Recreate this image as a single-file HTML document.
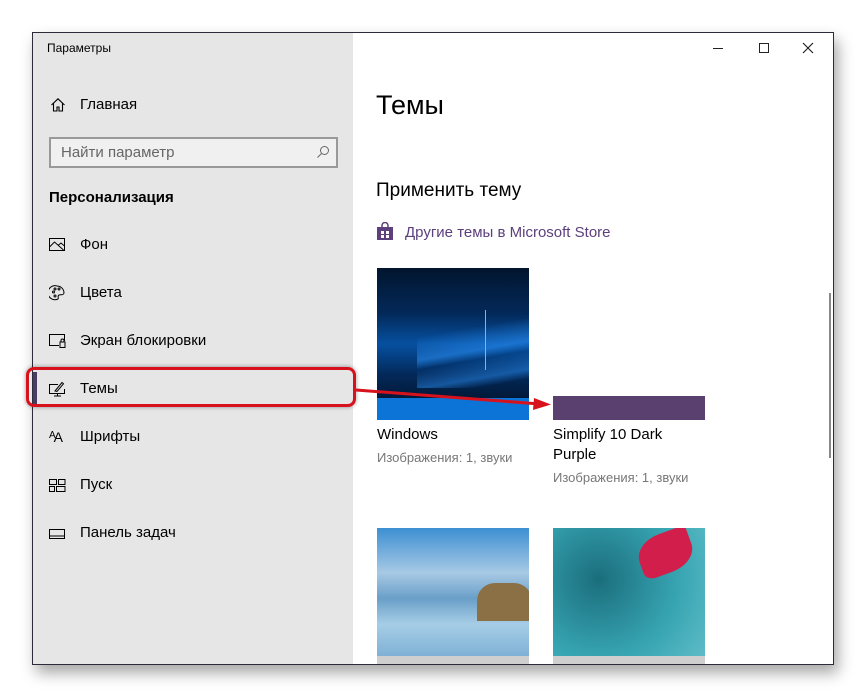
<!DOCTYPE html>
<html><head><meta charset="utf-8"><style>
*{margin:0;padding:0;box-sizing:border-box}
body{width:866px;height:697px;background:#fff;position:relative;overflow:hidden;font-family:"Segoe UI","Liberation Sans","DejaVu Sans",sans-serif;color:#000}
.win{position:absolute;left:32px;top:32px;width:802px;height:633px;border:1px solid #2b2b3a;background:#fff;box-shadow:4px 8px 14px rgba(0,0,0,.35);overflow:hidden}
.side{position:absolute;left:0;top:0;width:320px;height:100%;background:#e6e6e6}
.t{position:absolute;white-space:nowrap}
.nav{position:absolute;left:47px;font-size:15px;color:#000}
.ic{position:absolute;left:16px}
.thumb{position:absolute;width:152px}
</style></head><body>
<div class="win">
 <div class="side">
  <div class="t" style="left:14px;top:8px;font-size:12px">Параметры</div>
  <svg class="ic" style="left:17px;top:64px" width="16" height="16" viewBox="0 0 16 16" fill="none" stroke="#000" stroke-width="1.1"><path d="M1.5 8L8 1.8 14.5 8M3.5 6.3V14h3.5v-4h2v4h3.5V6.3"/></svg>
  <div class="nav t" style="top:63px">Главная</div>
  <div style="position:absolute;left:16px;top:104px;width:289px;height:31px;border:2px solid #999;background:#f0f0f0"></div>
  <div class="t" style="left:28px;top:111px;font-size:15px;color:#666">Найти параметр</div>
  <svg style="position:absolute;left:283px;top:112px" width="14" height="14" viewBox="0 0 14 14" fill="none" stroke="#666" stroke-width="1"><circle cx="8.5" cy="5.5" r="4"/><path d="M5.5 8.5L1.5 12.5"/></svg>
  <div class="t" style="left:16px;top:156px;font-size:15px;font-weight:bold">Персонализация</div>
  <svg class="ic" style="top:205px" width="17" height="14" viewBox="0 0 17 14" fill="none" stroke="#000" stroke-width="1"><rect x=".5" y=".5" width="15" height="12"/><path d="M.5 9l5-5 9 8M9 7.5l3-2.5 3.5 3"/></svg>
  <div class="nav t" style="top:203px">Фон</div>
  <svg class="ic" style="top:252px" width="16" height="16" viewBox="0 0 16 16" fill="none" stroke="#000" stroke-width="1"><path d="M8 1a7 7 0 1 0 1 13c1-1-1-3 1-4s4 1 5-2A7 7 0 0 0 8 1z"/><circle cx="4.5" cy="7" r="1"/><circle cx="6" cy="4" r="1"/><circle cx="10" cy="4" r="1"/><circle cx="6" cy="11" r="1"/></svg>
  <div class="nav t" style="top:251px">Цвета</div>
  <svg class="ic" style="top:301px" width="17" height="14" viewBox="0 0 17 14" fill="none" stroke="#000" stroke-width="1"><path d="M10 11.5H.5V.5h15V7"/><rect x="11" y="8" width="5" height="5.5"/><path d="M12 8V6.5a1.5 1.5 0 0 1 3 0V8"/></svg>
  <div class="nav t" style="top:299px">Экран блокировки</div>
  <div style="position:absolute;left:0;top:339px;width:4px;height:32px;background:#4b3a63"></div>
  <svg class="ic" style="top:348px" width="17" height="16" viewBox="0 0 17 16" fill="none" stroke="#000" stroke-width="1"><path d="M9 3.5H.5v9h15V8"/><path d="M5 15h7M8.5 12.5V15M6 10l7-8.5 1.5 1.3L8 10.5z"/></svg>
  <div class="nav t" style="top:347px">Темы</div>
  <div class="ic t" style="top:396px;font-size:14px;letter-spacing:-2px"><span style="font-size:10px;vertical-align:4px">A</span>A</div>
  <div class="nav t" style="top:395px">Шрифты</div>
  <svg class="ic" style="top:446px" width="17" height="13" viewBox="0 0 17 13" fill="none" stroke="#000" stroke-width="1"><rect x=".5" y=".5" width="7" height="5"/><rect x="9.5" y=".5" width="6.5" height="5"/><rect x=".5" y="7.5" width="5" height="5"/><rect x="7.5" y="7.5" width="8.5" height="5"/></svg>
  <div class="nav t" style="top:443px">Пуск</div>
  <svg class="ic" style="top:496px" width="17" height="11" viewBox="0 0 17 11" fill="none" stroke="#000" stroke-width="1"><rect x=".5" y=".5" width="15" height="9"/><path d="M.5 7h15"/></svg>
  <div class="nav t" style="top:491px">Панель задач</div>
 </div>
 <div style="position:absolute;left:680px;top:15px;width:10px;height:1px;background:#222"></div>
 <div style="position:absolute;left:726px;top:10px;width:10px;height:10px;border:1px solid #222"></div>
 <svg style="position:absolute;left:769px;top:9px" width="12" height="12" viewBox="0 0 12 12" stroke="#222" stroke-width="1.2"><path d="M1 1l10 10M11 1L1 11"/></svg>
 <div class="t" style="left:343px;top:57px;font-size:27px;font-weight:300">Темы</div>
 <div class="t" style="left:343px;top:147px;font-size:19px">Применить тему</div>
 <svg style="position:absolute;left:343px;top:189px" width="18" height="18" viewBox="0 0 18 18"><path d="M6 5V3.5a3 3 0 0 1 6 0V5" fill="none" stroke="#5c3f7c" stroke-width="1.5"/><rect x="1" y="5" width="16" height="13" fill="#5c3f7c"/><path d="M5 9h3v3H5zM10 9h3v3h-3zM5 13h3v3H5zM10 13h3v3h-3z" fill="#fff"/></svg>
 <div class="t" style="left:372px;top:191px;font-size:15px;color:#5c3f7c">Другие темы в Microsoft Store</div>
 <div class="thumb" style="left:344px;top:235px;height:152px;overflow:hidden;background:linear-gradient(180deg,#02152e 0%,#03295a 30%,#0650a0 50%,#03295a 70%,#021a3a 85%)">
  <div style="position:absolute;left:40px;top:50px;width:140px;height:70px;background:linear-gradient(170deg,transparent 20%,rgba(40,140,240,.6) 45%,transparent 55%,rgba(40,140,240,.5) 75%,transparent 85%)"></div>
  <div style="position:absolute;left:0;bottom:0;width:100%;height:22px;background:#0b74d6"></div><div style="position:absolute;left:108px;top:42px;width:1px;height:60px;background:#6fb8ff"></div></div>
 <div class="t" style="left:344px;top:393px;font-size:15px">Windows</div>
 <div class="t" style="left:344px;top:417px;font-size:13px;color:#777">Изображения: 1, звуки</div>
 <div class="thumb" style="left:520px;top:363px;height:24px;background:#5a406f"></div>
 <div class="t" style="left:520px;top:393px;font-size:15px">Simplify 10 Dark</div>
 <div class="t" style="left:520px;top:413px;font-size:15px">Purple</div>
 <div class="t" style="left:520px;top:437px;font-size:13px;color:#777">Изображения: 1, звуки</div>
 <div class="thumb" style="left:344px;top:495px;height:128px;overflow:hidden;background:linear-gradient(180deg,#3d8fd3 0%,#a7c9e4 35%,#6a9fc8 55%,#a6cde6 75%,#7fb1d6 100%)"><div style="position:absolute;left:100px;top:55px;width:55px;height:38px;background:#8a7044;border-radius:18px 18px 0 0"></div></div>
 <div class="thumb" style="left:344px;top:623px;height:10px;background:#cfcfcf"></div>
 <div class="thumb" style="left:520px;top:495px;height:128px;overflow:hidden;background:radial-gradient(circle at 30% 40%,#1b6e7c,#37a4b2 60%,#5dbcc6)"><div style="position:absolute;left:85px;top:5px;width:55px;height:40px;background:#d21e4a;border-radius:50% 10% 50% 20%;transform:rotate(-20deg)"></div></div>
 <div class="thumb" style="left:520px;top:623px;height:10px;background:#cfcfcf"></div>
 <div style="position:absolute;left:796px;top:260px;width:2px;height:165px;background:#888"></div>
</div>
<div style="position:absolute;left:26px;top:367px;width:330px;height:40px;border:3px solid #d8121c;border-radius:8px;box-shadow:0 0 4px rgba(0,0,0,.4)"></div>
<svg style="position:absolute;left:0;top:0" width="866" height="697"><path d="M356 390L540 404" stroke="#d8121c" stroke-width="3"/><path d="M534 398L551 404.5 533 410z" fill="#d8121c"/></svg>
</body></html>
